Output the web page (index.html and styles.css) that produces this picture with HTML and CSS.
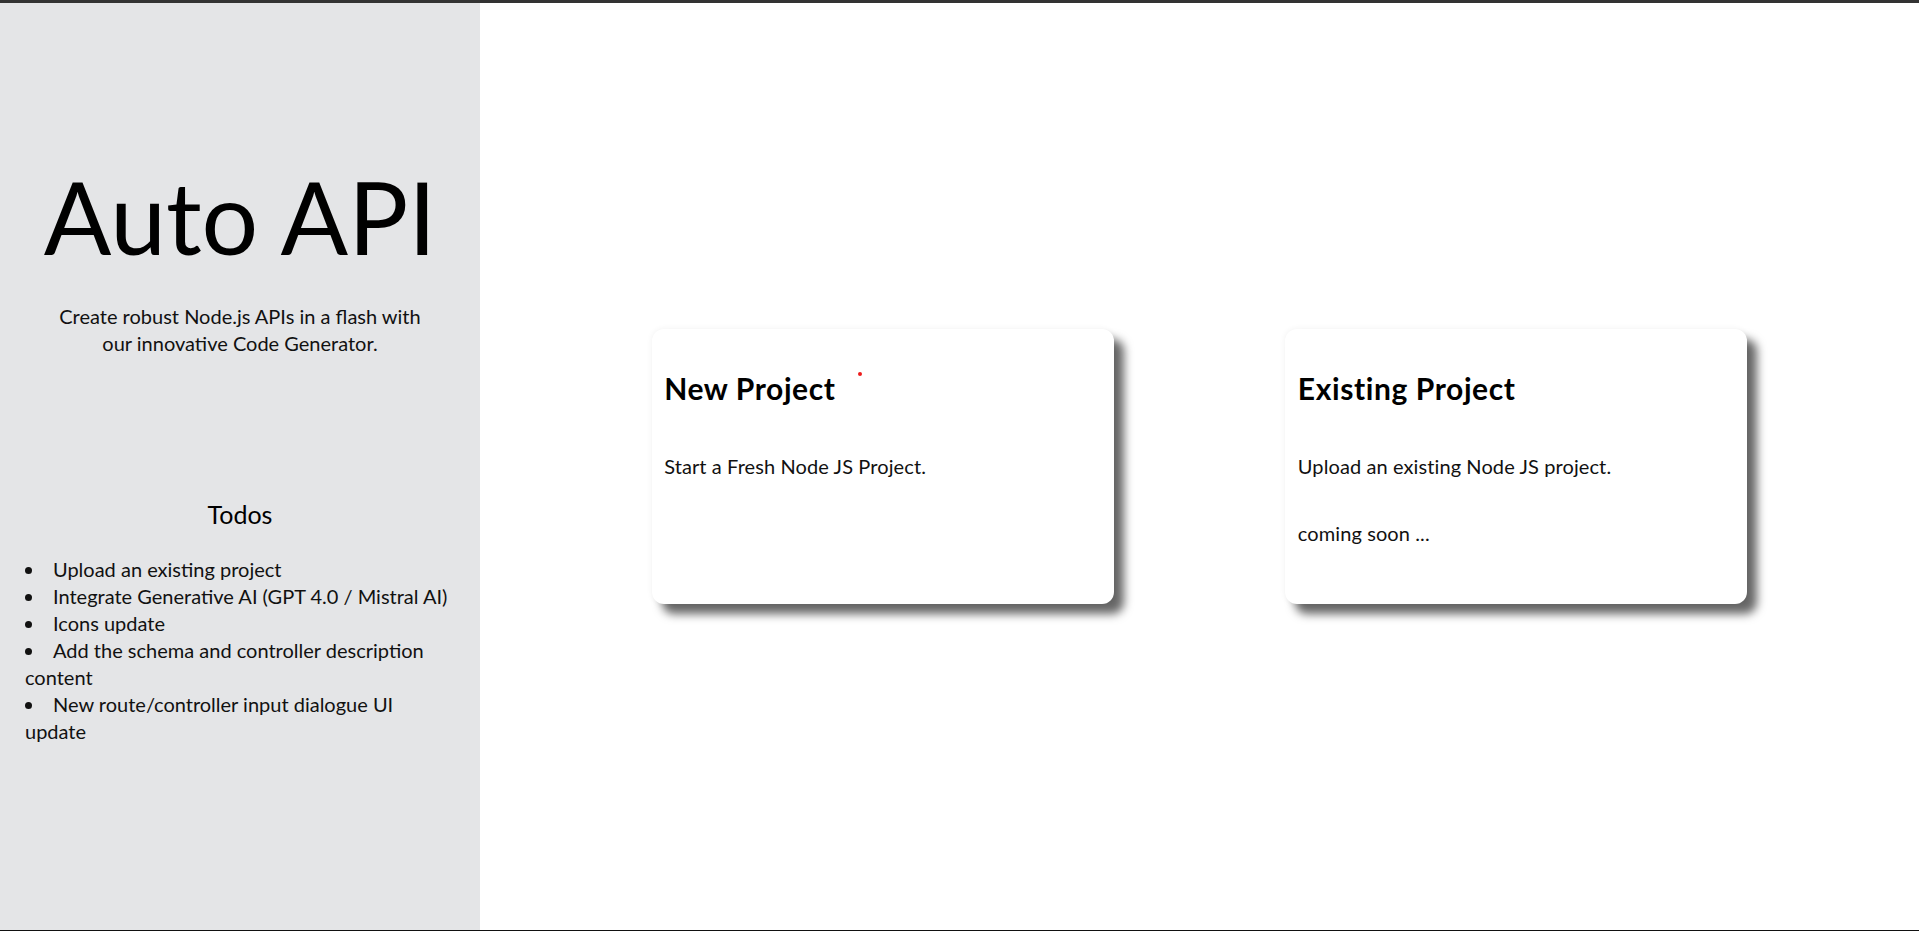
FILE: index.html
```html
<!DOCTYPE html>
<html lang="en">
<head>
<meta charset="utf-8">
<title>Auto API</title>
<link rel="stylesheet" href="styles.css">
</head>
<body>
<div class="app">
  <aside class="sidebar">
    <h1 class="brand">Auto API</h1>
    <p class="tagline">Create robust Node.js APIs in a flash with our innovative Code Generator.</p>
    <h3 class="todos-title">Todos</h3>
    <ul class="todos">
      <li>Upload an existing project</li>
      <li>Integrate Generative AI (GPT 4.0 / Mistral AI)</li>
      <li>Icons update</li>
      <li>Add the schema and controller description content</li>
      <li>New route/controller input dialogue UI update</li>
    </ul>
  </aside>
  <main class="main">
    <div class="card">
      <span class="dot"></span>
      <h2 class="card-title">New Project</h2>
      <p class="card-text">Start a Fresh Node JS Project.</p>
    </div>
    <div class="card">
      <h2 class="card-title">Existing Project</h2>
      <p class="card-text">Upload an existing Node JS project.</p>
      <p class="card-text">coming soon ...</p>
    </div>
  </main>
</div>
</body>
</html>
```
FILE: styles.css
```css
* { box-sizing: border-box; }
html, body { margin: 0; padding: 0; }
body {
  font-family: Lato, "Noto Sans", sans-serif;
  font-size: 20px;
  line-height: 27px;
  color: #111;
  background: #fff;
}
.app {
  height: 931px;
  display: flex;
  border-top: 3px solid #333;
  border-bottom: 1px solid #111;
  overflow: hidden;
}
.sidebar {
  width: 480px;
  flex: 0 0 480px;
  background: #e4e5e7;
  padding: 0 25px;
}
.brand {
  margin: 147px 0 0;
  font-size: 100px;
  line-height: 133px;
  font-weight: 400;
  text-align: center;
  color: #000;
}
.tagline {
  margin: 20px 0 0;
  padding: 0 25px;
  line-height: 26.6px;
  text-align: center;
}
.todos-title {
  margin: 141.6px 0 0;
  font-size: 25px;
  line-height: 33px;
  font-weight: 400;
  text-align: center;
  color: #000;
}
.todos {
  list-style: none;
  margin: 25.7px 0 0;
  padding: 0;
}
.todos li::before {
  content: "";
  display: inline-block;
  width: 7px;
  height: 7px;
  border-radius: 50%;
  background: #111;
  margin: 0 21px 3px 0;
}
.main {
  flex: 1;
  display: flex;
  align-items: center;
  justify-content: space-evenly;
}
.card {
  position: relative;
  width: 462px;
  height: 275px;
  padding: 14px 12.5px 12.5px;
  background: #fff;
  border-radius: 12px;
  box-shadow: 10px 10px 10px rgba(0, 0, 0, 0.6), 0 0 6px rgba(0, 0, 0, 0.06);
  display: flex;
  flex-direction: column;
}
.card-title {
  margin: 25px 0;
  font-size: 30px;
  line-height: 40px;
  font-weight: 700;
  letter-spacing: 0.6px;
  color: #000;
}
.card-text {
  margin: 20px 0;
  letter-spacing: 0.1px;
}
.dot {
  position: absolute;
  left: 206px;
  top: 43px;
  width: 4px;
  height: 4px;
  border-radius: 50%;
  background: #ee1c1c;
}
```
